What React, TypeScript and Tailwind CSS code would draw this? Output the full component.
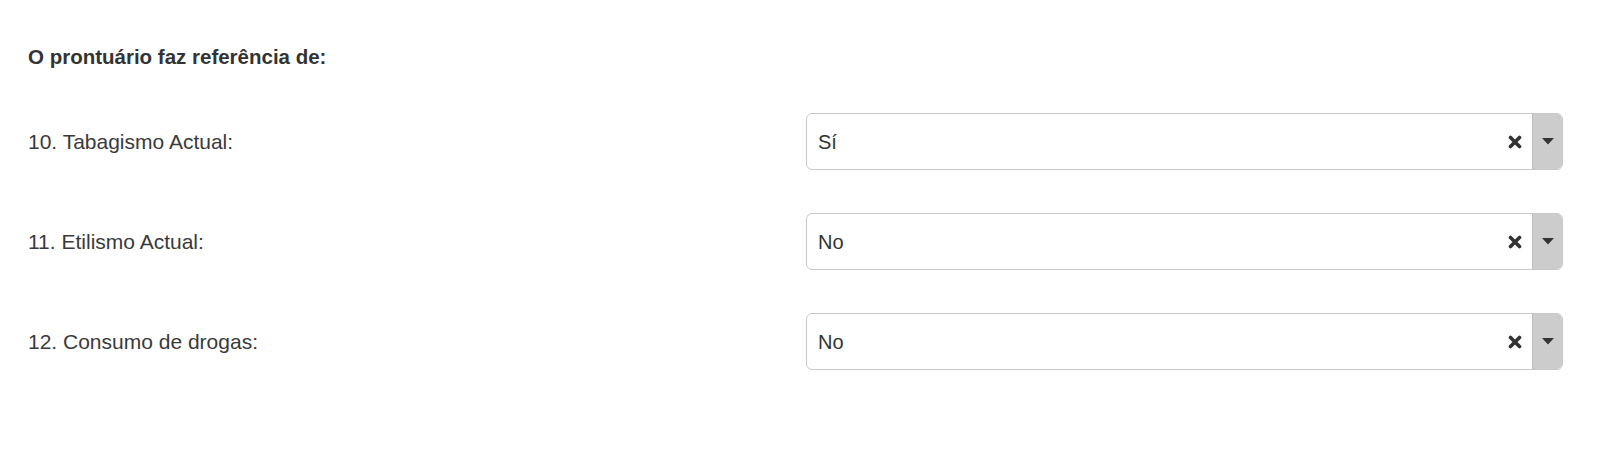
import React from 'react';

const rows = [
  { label: '10. Tabagismo Actual:', value: 'Sí' },
  { label: '11. Etilismo Actual:', value: 'No' },
  { label: '12. Consumo de drogas:', value: 'No' },
];

const ClearIcon: React.FC = () => (
  <svg width="14" height="14" viewBox="0 0 14 14" className="text-[#333]">
    <path d="M2.5 2.5 L11.5 11.5 M11.5 2.5 L2.5 11.5" stroke="currentColor" strokeWidth="3.6" strokeLinecap="round" />
  </svg>
);

const Caret: React.FC = () => (
  <svg width="12" height="7" viewBox="0 0 12 7" className="text-[#333]">
    <path d="M0 0 H12 L6 6.5 Z" fill="currentColor" />
  </svg>
);

const Select: React.FC<{ value: string }> = ({ value }) => (
  <div className="flex h-[57px] items-stretch rounded-[6px] border border-[#c8c8c8] bg-white">
    <span className="flex flex-1 items-center pl-[11px] text-[20px] text-[#333]">{value}</span>
    <span className="flex w-[32px] items-center justify-center pr-[3px]">
      <ClearIcon />
    </span>
    <span className="flex w-[30px] items-center justify-center rounded-r-[5px] border-l border-[#bdbdbd] bg-[#cccccc]">
      <Caret />
    </span>
  </div>
);

export default function App() {
  return (
    <div className="min-h-[462px] w-full bg-white pl-[28px] pr-[51px] pt-[43px] text-[#333]" style={{ fontFamily: '"Liberation Sans", Arial, sans-serif' }}>
      <h3 className="text-[20.5px] font-bold leading-[28px]">O prontuário faz referência de:</h3>

      <div className="mt-[42px] flex flex-col gap-[43px]">
        {rows.map((r) => (
          <div key={r.label} className="flex items-center">
            <label className="w-[778px] text-[21px] leading-[28px] text-[#3a3a3a]">{r.label}</label>
            <div className="flex-1">
              <Select value={r.value} />
            </div>
          </div>
        ))}
      </div>
    </div>
  );
}
